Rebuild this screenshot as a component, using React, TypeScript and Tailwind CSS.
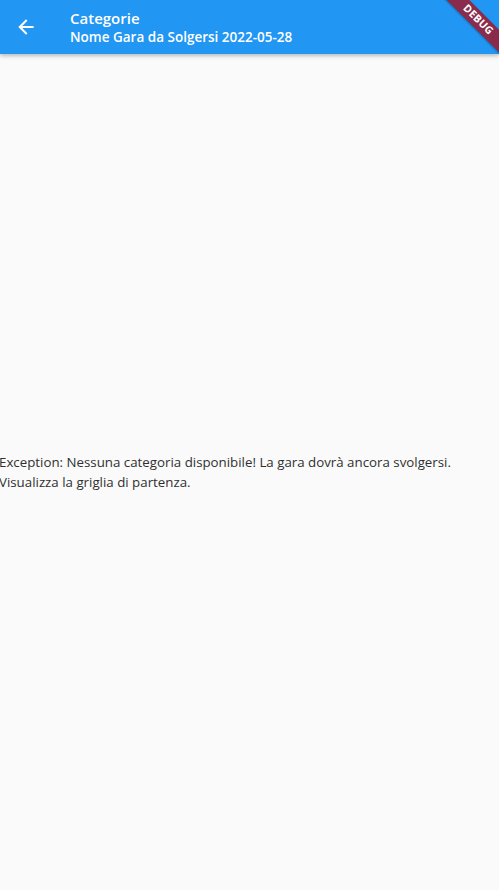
import React from 'react';

const App: React.FC = () => {
  return (
    <div
      className="relative flex h-[890px] w-[499px] flex-col overflow-hidden bg-[#fafafa]"
      style={{ fontFamily: '"Segoe UI", "Open Sans", sans-serif' }}
    >
      <header className="relative z-10 flex h-[54px] shrink-0 items-center bg-[#2196f3] text-white shadow-[0_2px_4px_rgba(0,0,0,0.25)]">
        <div className="flex w-[70px] shrink-0 items-center pl-[16px]">
          <svg width="20" height="20" viewBox="0 0 24 24" fill="none" stroke="white" strokeWidth="2.4" strokeLinecap="square">
            <path d="M20 12H5" />
            <path d="M12 4.5L4.5 12L12 19.5" />
          </svg>
        </div>
        <div className="flex flex-col leading-tight">
          <span className="text-[15px] font-semibold leading-[20px]">Categorie</span>
          <span className="text-[13.5px] font-semibold leading-[18px]">Nome Gara da Solgersi 2022-05-28</span>
        </div>
      </header>

      <main className="flex flex-1 items-center">
        <p className="ml-[-1px] text-[13.3px] leading-[20px] text-[#303030]">
          Exception: Nessuna categoria disponibile! La gara dovrà ancora svolgersi. Visualizza la griglia di partenza.
        </p>
      </main>

      <div className="pointer-events-none absolute left-[428px] top-[12px] z-20 flex h-[16px] w-[100px] rotate-45 items-center justify-center bg-[#8a2b4c] text-[10.5px] font-bold tracking-wide text-white shadow-[0_1px_2px_rgba(0,0,0,0.3)]">
        DEBUG
      </div>
    </div>
  );
};

export default App;
